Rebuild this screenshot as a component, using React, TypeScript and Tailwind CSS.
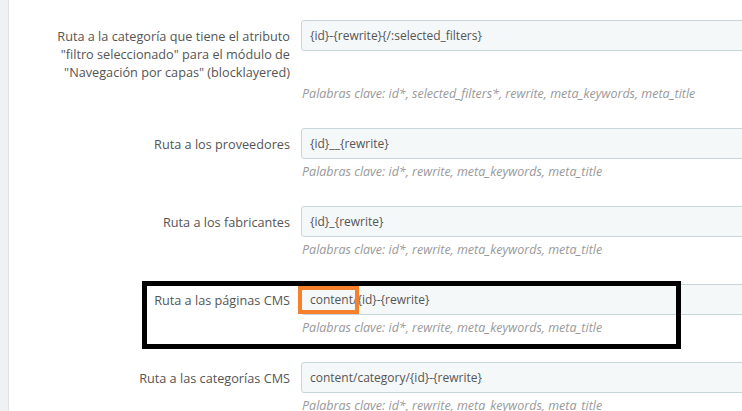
const font = { fontFamily: '"Open Sans", "DejaVu Sans", sans-serif' };

type Row = {
  label: string[];
  value: string;
  help: string;
};

const rows: Row[] = [
  {
    label: [
      'Ruta a la categoría que tiene el atributo',
      '"filtro seleccionado" para el módulo de',
      '"Navegación por capas" (blocklayered)',
    ],
    value: '{id}-{rewrite}{/:selected_filters}',
    help: 'Palabras clave: id*, selected_filters*, rewrite, meta_keywords, meta_title',
  },
  {
    label: ['Ruta a los proveedores'],
    value: '{id}__{rewrite}',
    help: 'Palabras clave: id*, rewrite, meta_keywords, meta_title',
  },
  {
    label: ['Ruta a los fabricantes'],
    value: '{id}_{rewrite}',
    help: 'Palabras clave: id*, rewrite, meta_keywords, meta_title',
  },
  {
    label: ['Ruta a las páginas CMS'],
    value: 'content/{id}-{rewrite}',
    help: 'Palabras clave: id*, rewrite, meta_keywords, meta_title',
  },
  {
    label: ['Ruta a las categorías CMS'],
    value: 'content/category/{id}-{rewrite}',
    help: 'Palabras clave: id*, rewrite, meta_keywords, meta_title',
  },
];

function FormRow({ row, highlight }: { row: Row; highlight?: boolean }) {
  return (
    <div className="relative grid grid-cols-[281px_460px] gap-x-[11px] mb-[25px]">
      {/* Label */}
      <label className="text-right text-[12.7px] leading-[18px] text-[#555] pt-[7px]">
        {row.label.map((l) => (
          <div key={l}>{l}</div>
        ))}
      </label>

      {/* Input */}
      <div className="relative h-[31px] bg-[#f5f8f9] border border-[#c7d6db] rounded-l-[3px] flex items-center pl-[8px] text-[12px] text-[#555]">
        {row.value}
        {highlight && (
          <div className="absolute left-[-4px] top-[1px] w-[61px] h-[28px] border-[4px] border-[#f7802b]" />
        )}
      </div>

      {/* Help text */}
      <div />
      <p className="mt-[4px] text-[12.5px] leading-[18px] italic text-[#999] pl-[1px]">{row.help}</p>
    </div>
  );
}

export default function App() {
  return (
    <div className="relative w-[742px] h-[411px] overflow-hidden bg-white flex" style={font}>
      {/* Left sidebar edge */}
      <div className="w-[9px] shrink-0 bg-[#eff1f2] border-r border-[#dfe3e5]" />

      <div className="pt-[20px]">
        {rows.map((row, i) => (
          <FormRow key={i} row={row} highlight={i === 3} />
        ))}
      </div>

      {/* Annotation box around the CMS pages row */}
      <div className="absolute left-[142px] top-[281px] w-[539px] h-[68px] border-[5px] border-black pointer-events-none" />
    </div>
  );
}
